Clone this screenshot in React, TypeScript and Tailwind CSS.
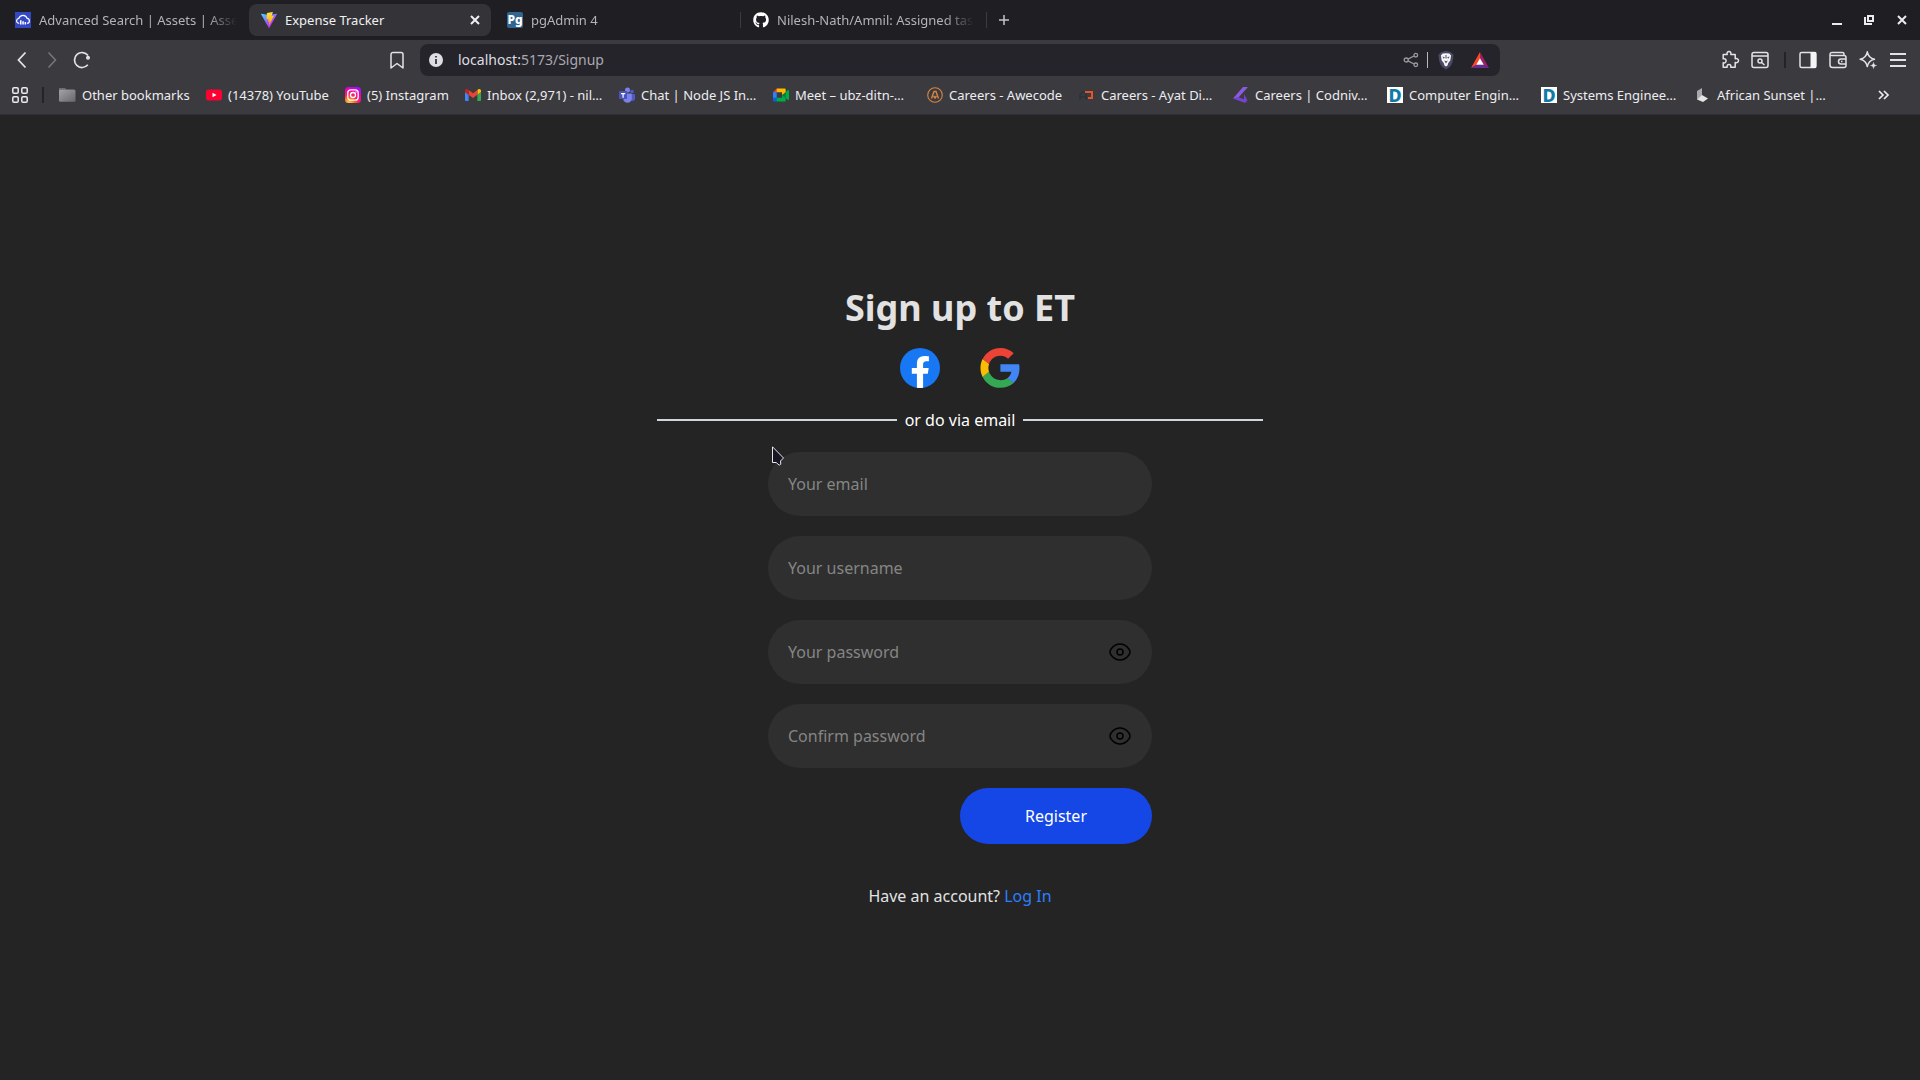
import React, { useState } from "react";
import { FaGithub } from "react-icons/fa";

type IconProps = { className?: string };

const CloudIcon = () => (
  <svg viewBox="0 0 16 16" className="size-4 shrink-0" aria-hidden="true">
    <rect width="16" height="16" fill="#3448c5" />
    <path d="M4.200 11.400C2.400 11.200 1.400 10 1.600 8.600c.1-1.200 1-2 2.200-2.200C4.500 4.400 6 3.300 8 3.300s3.600 1.200 4.100 3.100c1.400.2 2.300 1.200 2.300 2.500 0 1.300-.9 2.300-2.300 2.500" fill="none" stroke="#fff" strokeWidth="1.200" />
    <path d="M5 8.200h1.500v4.200H5zM7.300 9.200h1.500v3.200H7.300zM9.600 10h1.500v2.400H9.600z" fill="#fff" />
  </svg>
);

const ViteIcon = () => (
  <svg viewBox="0 0 256 257" className="size-4 shrink-0" aria-hidden="true">
    <defs>
      <linearGradient id="viteA" x1="-.8%" x2="57.600%" y1="7.700%" y2="78.400%">
        <stop offset="0%" stopColor="#41D1FF" />
        <stop offset="100%" stopColor="#BD34FE" />
      </linearGradient>
      <linearGradient id="viteB" x1="43.400%" x2="50.300%" y1="2.200%" y2="89%">
        <stop offset="0%" stopColor="#FFEA83" />
        <stop offset="8.300%" stopColor="#FFDD35" />
        <stop offset="100%" stopColor="#FFA800" />
      </linearGradient>
    </defs>
    <path fill="url(#viteA)" d="M255.153 37.938 134.897 252.976c-2.483 4.440-8.862 4.466-11.382.048L.875 37.958c-2.746-4.814 1.371-10.646 6.827-9.670l120.385 21.517a6.537 6.537 0 0 0 2.322-.004l117.867-21.483c5.438-.991 9.574 4.796 6.877 9.620Z" />
    <path fill="url(#viteB)" d="M185.432.063 96.440 17.501a3.268 3.268 0 0 0-2.634 3.014l-5.474 92.456a3.268 3.268 0 0 0 3.997 3.378l24.777-5.718c2.318-.535 4.413 1.507 3.936 3.838l-7.361 36.047c-.495 2.426 1.782 4.500 4.151 3.780l15.304-4.649c2.372-.720 4.652 1.360 4.150 3.788l-11.698 56.621c-.732 3.542 3.979 5.473 5.943 2.437l1.313-2.028 72.516-144.720c1.215-2.423-.880-5.186-3.540-4.672l-25.505 4.922c-2.396.462-4.435-1.770-3.759-4.114l16.646-57.705c.677-2.350-1.370-4.583-3.769-4.113Z" />
  </svg>
);

const PgIcon = () => (
  <span aria-hidden="true" className="flex size-4 shrink-0 items-center justify-center rounded-xs bg-[#326690] text-xs leading-3 font-extrabold text-white">
    Pg
  </span>
);

const CloseIcon = ({ className = "size-3" }: IconProps) => (
  <svg viewBox="0 0 12 12" className={className} fill="none" stroke="currentColor" strokeWidth="2" aria-hidden="true">
    <path d="m2 2 8 8M10 2l-8 8" />
  </svg>
);

const FolderIcon = () => (
  <svg viewBox="0 0 18 16" className="h-4 w-[18px] shrink-0" aria-hidden="true">
    <defs>
      <linearGradient id="folder" x1="0" y1="0" x2="1" y2="1">
        <stop offset="0" stopColor="#a3a2a6" />
        <stop offset="1" stopColor="#68676b" />
      </linearGradient>
    </defs>
    <path d="M1 1h6l1.500 1.500H16v3H1z" fill="#6c6b6d" />
    <rect x="1" y="2.800" width="16.500" height="12" rx="1" fill="url(#folder)" />
  </svg>
);

const YoutubeIcon = () => (
  <svg viewBox="0 0 16 16" className="size-4 shrink-0" aria-hidden="true">
    <rect y="2.500" width="16" height="11" rx="2.800" fill="#ff0033" />
    <path d="m6.500 5.700 4 2.300-4 2.300z" fill="#fff" />
  </svg>
);

const InstagramIcon = () => (
  <svg viewBox="0 0 16 16" className="size-4 shrink-0" aria-hidden="true">
    <defs>
      <radialGradient id="insta" cx=".25" cy="1.050" r="1.150">
        <stop offset="0" stopColor="#ffdd55" />
        <stop offset=".25" stopColor="#ff8a1f" />
        <stop offset=".5" stopColor="#ff1f5c" />
        <stop offset=".8" stopColor="#e800c0" />
        <stop offset="1" stopColor="#9a10ff" />
      </radialGradient>
    </defs>
    <rect width="16" height="16" rx="3.500" fill="url(#insta)" />
    <rect x="2.800" y="2.800" width="10.400" height="10.400" rx="3" fill="none" stroke="#fff" strokeWidth="1.300" />
    <circle cx="8" cy="8" r="2.500" fill="none" stroke="#fff" strokeWidth="1.300" />
    <circle cx="11" cy="5" r=".7" fill="#fff" />
  </svg>
);

const GmailIcon = () => (
  <svg viewBox="52 42 88 66" className="h-4 w-4 shrink-0 py-0.5" aria-hidden="true">
    <path fill="#4285f4" d="M58 108h14V74L52 59v43c0 3.320 2.690 6 6 6" />
    <path fill="#34a853" d="M120 108h14c3.320 0 6-2.690 6-6V59l-20 15" />
    <path fill="#fbbc04" d="M120 48v26l20-15v-8c0-7.420-8.470-11.650-14.400-7.200" />
    <path fill="#ea4335" d="M72 74V48l24 18 24-18v26L96 92" />
    <path fill="#c5221f" d="M52 51v8l20 15V48l-5.600-4.200c-5.940-4.450-14.400-.22-14.400 7.200" />
  </svg>
);

const TeamsIcon = () => (
  <svg viewBox="0 0 16 16" className="size-4 shrink-0" aria-hidden="true">
    <circle cx="13" cy="4.500" r="1.800" fill="#5059c9" />
    <path d="M10 7h5.200c.4 0 .8.300.8.800v3.700c0 1.500-1.200 2.500-2.500 2.500S10 13 10 11.500z" fill="#5059c9" />
    <circle cx="8.500" cy="3" r="2.500" fill="#7b83eb" />
    <path d="M5 6.500h7c.5 0 .8.400.8.800v4.200c0 2.500-1.800 4.300-4.300 4.300S4.200 14 4.200 11.500V7.300c0-.4.300-.8.800-.8z" fill="#7b83eb" />
    <rect x="0" y="4" width="8" height="8" rx=".8" fill="#4b53bc" />
    <path d="M2 6h4.200v1.200H4.700v3.600H3.500V7.200H2z" fill="#fff" />
  </svg>
);

const MeetIcon = () => (
  <svg viewBox="0 0 87.500 72" className="size-4 shrink-0" aria-hidden="true">
    <path fill="#00832d" d="m49.500 36 8.530 9.750 11.470 7.330 2-17.020-2-16.640-11.690 6.440z" />
    <path fill="#0066da" d="M0 51.500V66c0 3.315 2.685 6 6 6h14.500l3-10.960-3-9.540-9.950-3z" />
    <path fill="#e94235" d="M20.500 0 0 20.500l10.550 3 9.950-3 2.950-9.410z" />
    <path fill="#2684fc" d="M20.500 20.500H0v31h20.500z" />
    <path fill="#00ac47" d="M82.600 8.680 69.500 19.420v33.660l13.160 10.790c1.970 1.540 4.850.135 4.850-2.370V11c0-2.535-2.945-3.925-4.910-2.320zM49.500 36v15.500h-29V72h43c3.315 0 6-2.685 6-6V53.080z" />
    <path fill="#ffba00" d="M63.500 0h-43v20.500h29V36l20-16.570V6c0-3.315-2.685-6-6-6z" />
  </svg>
);

const AwecodeIcon = () => (
  <svg viewBox="0 0 16 16" className="size-4 shrink-0" fill="none" stroke="#d98542" aria-hidden="true">
    <circle cx="8" cy="8" r="7.300" strokeWidth="1.100" />
    <path d="M4.500 11.500 7 4.500h2l2.500 7M6.600 9l1.400 2 1.400-2" strokeWidth="1.400" />
  </svg>
);

const AyatIcon = () => (
  <svg viewBox="0 0 16 16" className="size-4 shrink-0" fill="none" strokeWidth="2" aria-hidden="true">
    <path d="M1 13V7.500l3-2.500h3v8M1 10h6" stroke="#2c323c" strokeWidth="1.600" />
    <path d="M6 5h7v6H9" stroke="#e5532d" />
  </svg>
);

const CodnivIcon = () => (
  <svg viewBox="0 0 16 16" className="size-4 shrink-0" aria-hidden="true">
    <path d="M10 0h5L5 11 0 11.500z" fill="#8a5be0" />
    <path d="M0 11.500 5 10l6 2.200V7l3.500 6.500L12 16z" fill="#7443cf" />
  </svg>
);

const DIcon = () => (
  <span aria-hidden="true" className="flex size-4 shrink-0 items-center justify-center bg-white text-lg leading-4 font-extrabold text-[#0f7aa8]">
    D
  </span>
);

const CubeIcon = () => (
  <svg viewBox="0 0 16 16" className="size-4 shrink-0" aria-hidden="true">
    <path d="M7 1v8l-5 3.500V4z" fill="#a9a9aa" />
    <path d="m7 8 6 3.500L8 15l-6-2.500z" fill="#e5e5e5" />
  </svg>
);

const tabs = [
  { title: "Advanced Search | Assets | Assets", icon: <CloudIcon />, active: false, line: false },
  { title: "Expense Tracker", icon: <ViteIcon />, active: true, line: false },
  { title: "pgAdmin 4", icon: <PgIcon />, active: false, line: true },
  { title: "Nilesh-Nath/Amnil: Assigned tasks", icon: <FaGithub className="size-4 shrink-0 text-white" />, active: false, line: true },
];

const bookmarks = [
  { label: "(14378) YouTube", icon: <YoutubeIcon />, width: "w-[123px]" },
  { label: "(5) Instagram", icon: <InstagramIcon />, width: "w-[104px]" },
  { label: "Inbox (2,971) - nil…", icon: <GmailIcon />, width: "w-[138px]" },
  { label: "Chat | Node JS In…", icon: <TeamsIcon />, width: "w-[138px]" },
  { label: "Meet – ubz-ditn-…", icon: <MeetIcon />, width: "w-[138px]" },
  { label: "Careers - Awecode", icon: <AwecodeIcon />, width: "w-[136px]" },
  { label: "Careers - Ayat Di…", icon: <AyatIcon />, width: "w-[138px]" },
  { label: "Careers | Codniv…", icon: <CodnivIcon />, width: "w-[138px]" },
  { label: "Computer Engin…", icon: <DIcon />, width: "w-[138px]" },
  { label: "Systems Enginee…", icon: <DIcon />, width: "w-[138px]" },
  { label: "African Sunset |…", icon: <CubeIcon />, width: "w-[138px]" },
];

function TabStrip() {
  return (
    <header className="flex h-10 items-center bg-[#1f1e23] pl-[3px] text-[13px] leading-4">
      <div role="tablist" className="flex h-full items-center">
        {tabs.map((t) => (
          <div key={t.title} className="flex h-full w-[246px] items-center">
            <div className={t.active ? "mr-1 flex h-8 min-w-0 flex-1 items-center rounded-lg bg-[#343338] pr-2 pl-3 text-[#f0f0f2]" : "flex h-8 min-w-0 flex-1 items-center pr-3 pl-3 text-[#b4b3b8]"}>
              <button role="tab" aria-selected={t.active} className="flex min-w-0 flex-1 items-center gap-2 text-left">
                {t.icon}
                <span className={t.active ? "flex-1 overflow-hidden whitespace-nowrap" : "flex-1 overflow-hidden whitespace-nowrap mask-r-from-85% mask-r-to-100%"}>{t.title}</span>
              </button>
              {t.active && (
                <button aria-label="Close tab" className="flex size-4 items-center justify-center">
                  <CloseIcon />
                </button>
              )}
            </div>
            {t.line && <div className="h-4 w-px bg-[#3c3b41]" />}
          </div>
        ))}
      </div>
      <button aria-label="New tab" className="flex h-8 w-[34px] items-center justify-center text-[#c6c5ca]">
        <svg viewBox="0 0 12 12" className="size-3" stroke="currentColor" strokeWidth="1.500" aria-hidden="true">
          <path d="M6 1v10M1 6h10" />
        </svg>
      </button>
      <div className="ml-auto flex items-center gap-5 pr-3 text-[#ececf0]">
        <button aria-label="Minimize" className="flex size-3">
          <svg viewBox="0 0 12 12" className="size-3" aria-hidden="true">
            <path d="M0 9h10v2H0z" fill="currentColor" />
          </svg>
        </button>
        <button aria-label="Restore" className="flex size-3">
          <svg viewBox="0 0 12 12" className="size-3" fill="none" stroke="currentColor" strokeWidth="2" aria-hidden="true">
            <path d="M4 2h5v5H4zM1 3v7h7" />
          </svg>
        </button>
        <button aria-label="Close window" className="flex size-3">
          <CloseIcon />
        </button>
      </div>
    </header>
  );
}

function Toolbar() {
  return (
    <div className="flex h-10 items-center bg-[#3b3a3f] text-[#e3e3e6]">
      <div className="flex w-7/32 items-center gap-2.5 pr-3.5 pl-3">
        <button aria-label="Back">
          <svg viewBox="0 0 20 20" className="size-5" fill="none" stroke="currentColor" strokeWidth="1.800" aria-hidden="true">
            <path d="m13.500 2.500-7 7.500 7 7.500" />
          </svg>
        </button>
        <button aria-label="Forward" className="text-[#78777c]">
          <svg viewBox="0 0 20 20" className="size-5" fill="none" stroke="currentColor" strokeWidth="1.500" aria-hidden="true">
            <path d="m6.500 2.500 7 7.500-7 7.500" />
          </svg>
        </button>
        <button aria-label="Reload">
          <svg viewBox="0 0 20 20" className="size-5" fill="none" stroke="currentColor" strokeWidth="1.700" aria-hidden="true">
            <path d="M15.800 14.800A7.500 7.500 0 1 1 16 5.500" />
            <circle cx="16" cy="7.800" r="2" fill="currentColor" stroke="none" />
          </svg>
        </button>
        <button aria-label="Bookmark this page" className="ml-auto">
          <svg viewBox="0 0 18 18" className="size-[18px]" fill="none" stroke="currentColor" strokeWidth="1.500" strokeLinejoin="round" aria-hidden="true">
            <path d="M5 1.500h8a2 2 0 0 1 2 2V17l-6-4.500L3 17V3.500a2 2 0 0 1 2-2z" />
          </svg>
        </button>
      </div>
      <div className="flex h-8 w-9/16 items-center rounded-lg bg-[#25242a] pr-2.5 pl-2">
        <button aria-label="Site information">
          <svg viewBox="0 0 16 16" className="size-4" aria-hidden="true">
            <circle cx="8" cy="8" r="7" fill="#dedee2" />
            <path d="M7 4h2v1.600H7zM7 7h2v5H7z" fill="#45444a" />
          </svg>
        </button>
        <div className="flex-1 pl-3.5 text-sm text-[#aaa9b0]">
          <span className="text-[#dedde3]">localhost:</span>5173/Signup
        </div>
        <button aria-label="Share" className="text-[#9b9aa0]">
          <svg viewBox="0 0 16 16" className="size-4" fill="none" stroke="currentColor" strokeWidth="1.300" aria-hidden="true">
            <circle cx="3.200" cy="8" r="2" />
            <circle cx="12.800" cy="3.200" r="1.800" />
            <circle cx="12.800" cy="12.800" r="1.800" />
            <path d="m5 7.100 6-3.100M5 8.900l6 3.100" />
          </svg>
        </button>
        <div className="mx-2 h-4 w-px bg-[#b9b9bd]" />
        <button aria-label="Brave Shields" className="mr-3.5">
          <svg viewBox="0 0 20 20" className="size-5" aria-hidden="true">
            <path d="M10 .8 15 2.200l2.500 2.600c0 5.500-1.500 9.600-3.500 12L10 19.500 6 16.800c-2-2.400-3.500-6.500-3.500-12L5 2.200z" fill="#494a62" />
            <path d="M10 3.200 13.300 3.500l1.800 2-.8 5-2 2.500-.8 2.500-1.500.9-1.500-.9-.8-2.500-2-2.500-.8-5 1.800-2z" fill="#f5f5f7" />
            <path d="m6.300 6.500 2.500.8-.9 1.400zM13.700 6.500l-2.500.8.900 1.400zM8.200 10.500l1.800.8 1.800-.8-1.800 3zM9.500 5h1v3.500h-1z" fill="#494a62" />
          </svg>
        </button>
        <button aria-label="Brave Rewards">
          <svg viewBox="0 0 20 20" className="size-5" aria-hidden="true">
            <path d="M10 2 1 18l5.500-3L10 8.500z" fill="#ff4724" />
            <path d="m10 2 9 16-5.500-3L10 8.500z" fill="#9e1f63" />
            <path d="m1 18 5.500-3.500h7L19 18z" fill="#662d91" />
            <path d="m10 8.200 3.800 6.600H6.200z" fill="#fff" />
          </svg>
        </button>
      </div>
      <div className="flex w-7/32 items-center justify-end gap-2.5 pr-3">
        <button aria-label="Extensions">
          <svg viewBox="0 0 20 20" className="size-5" fill="none" stroke="currentColor" strokeWidth="1.500" strokeLinejoin="round" aria-hidden="true">
            <path d="M3.200 4.500h4C6.600 2.800 7.500 1.400 9 1.400s2.400 1.400 1.800 3.100h4.400v4.200c1.700-.5 3.300.3 3.300 1.900s-1.600 2.500-3.300 1.900v4.700h-4.400c.3-1.700-.3-2.700-1.800-2.700s-2.100 1-1.800 2.700h-4v-4.400c2 .4 2.900-.6 2.900-2s-.9-2.400-2.900-2z" />
          </svg>
        </button>
        <button aria-label="Search tabs">
          <svg viewBox="0 0 20 20" className="size-5" fill="none" stroke="currentColor" strokeWidth="1.500" aria-hidden="true">
            <rect x="2" y="2.500" width="16" height="15" rx="2" />
            <path d="M2 6h16M11.500 12.500l3 2.500" />
            <circle cx="10" cy="11" r="2" />
          </svg>
        </button>
        <div className="mr-0.5 ml-1 h-4 w-0.5 bg-[#242328]" />
        <button aria-label="Side panel">
          <svg viewBox="0 0 20 20" className="size-5" aria-hidden="true">
            <rect x="2" y="2.500" width="16" height="15" rx="1.500" fill="none" stroke="currentColor" strokeWidth="1.500" />
            <path d="M12.500 2H18v16h-5.500z" fill="#f4f4f5" />
          </svg>
        </button>
        <button aria-label="Wallet">
          <svg viewBox="0 0 20 20" className="size-5" fill="none" stroke="currentColor" strokeWidth="1.500" strokeLinejoin="round" aria-hidden="true">
            <path d="M16 5.500V4a1.500 1.500 0 0 0-1.500-1.500H4A2 2 0 0 0 2 4.500V15a2.500 2.500 0 0 0 2.500 2.500H16a2 2 0 0 0 2-2V7.500a2 2 0 0 0-2-2H4a2 2 0 0 1-2-1" />
            <path d="M18 9h-5a2.500 2.500 0 0 0 0 5h5M13 11.500h1.500" />
          </svg>
        </button>
        <button aria-label="Leo AI">
          <svg viewBox="0 0 20 20" className="size-5" fill="none" stroke="currentColor" strokeWidth="1.500" strokeLinejoin="round" aria-hidden="true">
            <path d="M9.300 1.800c.7 4 2.600 6.500 7.200 7.400-4.600.9-6.500 3.400-7.200 7.400-.7-4-2.600-6.500-7.200-7.400 4.600-.9 6.500-3.400 7.200-7.400z" />
            <path d="M15.500 12.500c.3 1.900 1 2.700 3 3-2 .3-2.700 1.100-3 3-.3-1.900-1-2.700-3-3 2-.3 2.700-1.100 3-3z" fill="currentColor" strokeWidth=".5" />
          </svg>
        </button>
        <button aria-label="Menu">
          <svg viewBox="0 0 20 20" className="size-5" stroke="currentColor" strokeWidth="2" aria-hidden="true">
            <path d="M2 4h16M2 10h16M2 16h16" />
          </svg>
        </button>
      </div>
    </div>
  );
}

function BookmarksBar() {
  return (
    <nav aria-label="Bookmarks" className="flex h-[35px] items-center border-b border-[#303034] bg-[#3b3a3f] pr-7 pb-1 pl-3 text-[13px] leading-4 text-[#ededf0]">
      <button aria-label="Apps">
        <svg viewBox="0 0 16 16" className="size-4" fill="none" stroke="currentColor" strokeWidth="1.500" aria-hidden="true">
          <rect x=".8" y=".8" width="5.400" height="5.400" rx="1.300" />
          <rect x="9.800" y=".8" width="5.400" height="5.400" rx="1.300" />
          <rect x=".8" y="9.800" width="5.400" height="5.400" rx="1.300" />
          <rect x="9.800" y="9.800" width="5.400" height="5.400" rx="1.300" />
        </svg>
      </button>
      <div className="mx-3.5 h-4 w-0.5 bg-[#242328]" />
      <div className="flex min-w-0 flex-1 items-center gap-4">
        <button className="flex w-[132px] shrink-0 items-center gap-1.5 whitespace-nowrap">
          <FolderIcon />
          Other bookmarks
        </button>
        {bookmarks.map((b) => (
          <a key={b.label} href="#" className={`flex shrink-0 items-center gap-1.5 whitespace-nowrap ${b.width}`}>
            {b.icon}
            {b.label}
          </a>
        ))}
      </div>
      <button aria-label="More bookmarks">
        <svg viewBox="0 0 16 16" className="size-4" fill="none" stroke="currentColor" strokeWidth="1.700" aria-hidden="true">
          <path d="m3 4 4 4-4 4M8 4l4 4-4 4" />
        </svg>
      </button>
    </nav>
  );
}

const fieldClass =
  "h-16 w-full rounded-full bg-[#2f2f2f] px-5 text-base text-white placeholder:text-[#858585] outline-none";

function PasswordField({ label }: { label: string }) {
  const [visible, setVisible] = useState(false);
  return (
    <div className="relative">
      <input type={visible ? "text" : "password"} aria-label={label} placeholder={label} className={fieldClass} />
      <button type="button" aria-label="Show password" onClick={() => setVisible(!visible)} className="absolute top-5 right-5 text-black">
        <svg viewBox="0 0 24 24" className="size-6" fill="none" stroke="currentColor" strokeWidth="1.500" aria-hidden="true">
          <path d="M3.275 15.296C2.425 14.192 2 13.639 2 12c0-1.640.425-2.191 1.275-3.296C4.972 6.500 7.818 4 12 4s7.028 2.500 8.725 4.704C21.575 9.810 22 10.361 22 12c0 1.640-.425 2.191-1.275 3.296C19.028 17.500 16.182 20 12 20s-7.028-2.500-8.725-4.704Z" />
          <circle cx="12" cy="12" r="3" />
        </svg>
      </button>
    </div>
  );
}

function SignupPage() {
  return (
    <main className="flex flex-1 flex-col items-center justify-center gap-5 bg-[#242424] text-base text-white">
      <h1 className="text-4xl font-bold text-[#e2e2e2]">Sign up to ET</h1>
      <div className="flex gap-10">
        <button aria-label="Sign up with Facebook" className="size-10">
          <svg viewBox="0 0 40 40" className="size-10" aria-hidden="true">
            <circle cx="20" cy="20" r="20" fill="#1877f2" />
            <path d="M27.800 25.800 28.700 20h-5.600v-3.700c0-1.600.8-3.100 3.300-3.100h2.500v-4.900s-2.300-.4-4.500-.4c-4.600 0-7.500 2.800-7.500 7.700V20h-5.100v5.800h5.100v14a20 20 0 0 0 6.200 0v-14z" fill="#fff" />
          </svg>
        </button>
        <button aria-label="Sign up with Google" className="size-10">
          <svg viewBox="0 0 256 262" className="size-10" aria-hidden="true">
            <path fill="#4285f4" d="M255.878 133.451c0-10.734-.871-18.567-2.756-26.690H130.550v48.448h71.947c-1.450 12.040-9.283 30.172-26.690 42.356l-.244 1.622 38.755 30.023 2.685.268c24.659-22.774 38.875-56.282 38.875-96.027" />
            <path fill="#34a853" d="M130.550 261.100c35.248 0 64.839-11.605 86.453-31.622l-41.196-31.913c-11.024 7.688-25.820 13.055-45.257 13.055-34.523 0-63.824-22.773-74.269-54.250l-1.531.130-40.298 31.187-.527 1.465C35.393 231.798 79.490 261.100 130.550 261.100" />
            <path fill="#fbbc05" d="M56.281 156.370c-2.756-8.123-4.351-16.827-4.351-25.820 0-8.994 1.595-17.697 4.206-25.820l-.073-1.730L15.260 71.312l-1.335.635C5.077 89.644 0 109.517 0 130.550s5.077 40.905 13.925 58.602l42.356-32.782" />
            <path fill="#eb4335" d="M130.550 50.479c24.514 0 41.050 10.589 50.479 19.438l36.844-35.974C195.245 12.910 165.798 0 130.550 0 79.490 0 35.393 29.301 13.925 71.947l42.211 32.783c10.590-31.477 39.891-54.251 74.414-54.251" />
          </svg>
        </button>
      </div>
      <div className="flex items-center gap-2">
        <div className="h-0.5 w-60 bg-gray-300" />
        <span>or do via email</span>
        <div className="h-0.5 w-60 bg-gray-300" />
      </div>
      <form className="flex w-96 flex-col gap-5" onSubmit={(e) => e.preventDefault()}>
        <div className="relative">
          <input type="email" aria-label="Your email" placeholder="Your email" className={fieldClass} />
          <svg viewBox="0 0 12 20" className="absolute -top-1.5 left-1 h-5 w-3" fill="#181825" stroke="#e6e6ee" strokeWidth="1" aria-hidden="true">
            <path d="M.5.800v15.700h3.700l3 2.700 1.600-1-.3-3.200 3-3z" />
          </svg>
        </div>
        <input type="text" aria-label="Your username" placeholder="Your username" className={fieldClass} />
        <PasswordField label="Your password" />
        <PasswordField label="Confirm password" />
        <button type="submit" className="h-14 w-48 self-end rounded-full bg-[#1447e6] text-white">
          Register
        </button>
      </form>
      <p className="mt-5 text-[#e2e2e2]">
        Have an account?{" "}
        <a href="#" className="text-[#2b7fff]">
          Log In
        </a>
      </p>
    </main>
  );
}

export default function App() {
  return (
    <div className="flex min-h-screen flex-col overflow-x-hidden bg-[#242424] font-['Noto_Sans',sans-serif]">
      <TabStrip />
      <Toolbar />
      <BookmarksBar />
      <SignupPage />
    </div>
  );
}
